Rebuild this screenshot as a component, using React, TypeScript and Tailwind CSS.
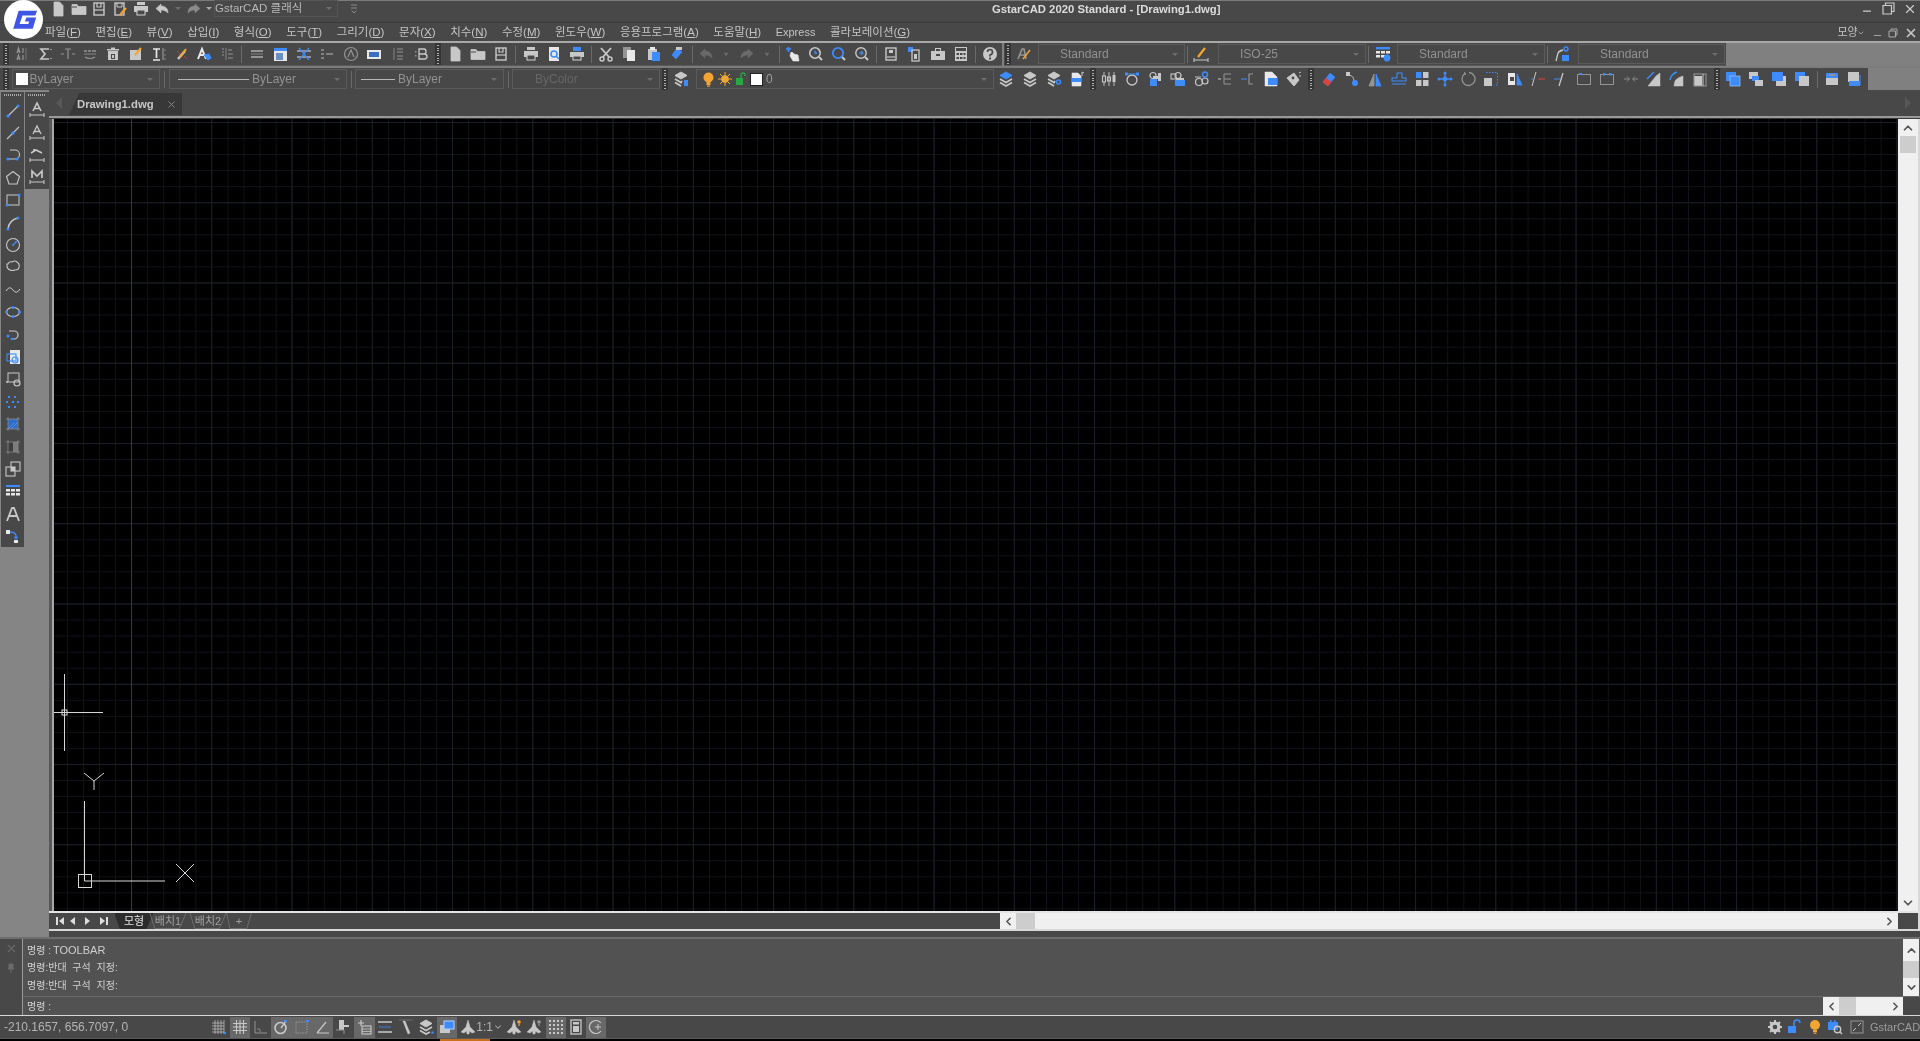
import React, { createElement as h } from 'react';
import { ChevronUp, ChevronDown, ChevronLeft, ChevronRight, X, Minus } from 'lucide-react';

const L = '#c8c8c8', M = '#949494', B = '#3d8bfd', O = '#f2a531', R = '#e0403c', W = '#e8e8e8', K = '#484848';
const Ic = (...kids: React.ReactNode[]) => h('svg', { width: 16, height: 16, viewBox: '0 0 16 16', fill: 'none' }, ...kids);
const p = (d: string, c = L, w = 1.2, f = 'none') => h('path', { d, stroke: c, strokeWidth: w, fill: f });
const r = (x: number, y: number, w: number, hh: number, f = L) => h('rect', { x, y, width: w, height: hh, fill: f });
const o = (x: number, y: number, w: number, hh: number, c = L, sw = 1.1) => h('rect', { x, y, width: w, height: hh, stroke: c, strokeWidth: sw, fill: 'none' });
const c = (x: number, y: number, rr: number, f = L) => h('circle', { cx: x, cy: y, r: rr, fill: f });
const cs = (x: number, y: number, rr: number, s = L, w = 1.2) => h('circle', { cx: x, cy: y, r: rr, stroke: s, strokeWidth: w, fill: 'none' });

const stack = (top: string, rest = L) => Ic(p('M8 1l6 3.5L8 8 2 4.5z', top, 1, top), p('M2 8l6 3.5L14 8', rest, 1.7), p('M2 11.5L8 15l6-3.5', rest, 1.7));

const g1 = [
  Ic(p('M3 7l1.5-5L6 7M3.5 5.5h2', M), p('M3 14l1.5-5L6 14M3.5 12.5h2', M), p('M9 2v5M9 9v5', M), p('M12 2v12', M, .6)),
  Ic(p('M12 3H4l4 5-4 5h8', L, 1.7), r(13, 3, 2, 1, M), r(13, 12, 2, 1, M)),
  Ic(p('M5 3h6M8 3v10', M), p('M1 8h3M12 8h3', M)),
  Ic(p('M2 5h3M6 5h3M10 5h4', M, 1.5), p('M2 8h12', M, .8), p('M3 11q5 3 10 0', M)),
  Ic(r(3, 5, 10, 9), r(2, 3, 12, 1.5), r(6, 1.5, 4, 1.5), r(6, 8, 4, 5, K), r(7, 9, 2, 3)),
  Ic(r(2, 4, 11, 10), p('M7 9l6-7', O, 2)),
  Ic(p('M2 3h7M5.5 3v9M2 14h7', W, 1.7), p('M12 2v12', M), p('M14 3v2M14 8v2M14 12v2', M, .8)),
  Ic(p('M4 13l7-8', L, 2.5), p('M6 11l6-8', O, 2), p('M3 5l3 3M10 10l3 3', R, .8)),
  Ic(p('M2 13l4-10 4 10M4 9h4', W, 2), p('M8 9l5-1 2 4-3 2z', B, 1, B)),
  Ic(p('M7 2v12', M, .8), p('M3 3h2M3 6h2M3 9h2', M), p('M9 4h4M9 8h5M9 12h5', M)),
];
const abc = Ic(p('M2 5h12', M, 2), p('M2 8h12', M, .8), p('M2 11h12', M, 2));
const g2 = [
  abc,
  Ic(r(2, 2, 13, 13, W), r(2, 2, 13, 3, B), r(4, 7, 7, 7, '#6d8fc0')),
  Ic(p('M1 5h14', M, 2), p('M1 11h14', M, 2), p('M3 2l10 12M13 2L3 14', B, 1.3)),
  Ic(p('M2 4h3M2 8h3M2 12h3', M, 1.3), p('M7 8h7', M, 1.5)),
  Ic(cs(8, 8, 6.5, M), p('M5 11l3-7 3 7', M)),
  Ic(r(1, 4, 14, 9, W), r(3, 6, 10, 5, '#3d6fc0')),
  Ic(p('M4 2v12', M, .8), p('M7 3h6M7 6h6M7 10h6M7 13h6', M)),
  Ic(r(2, 5, 1.5, 1.5, M), r(2, 9, 1.5, 1.5, M), p('M6 3h5q2 0 2 2.5T11 8H6zM6 8h5.5q2.5 0 2.5 2.5T11.5 13H6z', L, 1.3)),
];
const doc = Ic(p('M4 1h5.5L13 4.5V15H4z', L, .8, L));
const folder = Ic(p('M1 3.5h5l1.5 2H15v8H1z', L, .8, L), r(1, 5.5, 5, 1, K));
const save = Ic(o(3, 2, 10, 12, L, 1.4), p('M6 2v4h4V2', L, 1.2), p('M3 9h10', L, 1.2));
const g3 = [doc, folder, save];
const g4 = [
  Ic(r(4, 1, 8, 3), r(1, 5, 14, 6), r(4, 9, 8, 5, K), o(4, 9, 8, 5, L)),
  Ic(r(3, 1, 10, 14, W), cs(8, 8, 3, B, 1.6), p('M10 10l3 3', B, 1.6)),
  Ic(r(4, 1, 8, 4, B), r(1, 6, 14, 5), r(4, 10, 8, 5, K), o(4, 10, 8, 4, L)),
];
const g5 = [
  Ic(p('M3 2l8 9M13 2L5 11', L, 1.8), cs(4, 13, 2, L, 1.5), cs(12, 13, 2, L, 1.5)),
  Ic(r(2, 1, 8, 11, M), r(6, 4, 8, 11, W)),
  Ic(r(3, 3, 9, 11, L), r(5, 1, 5, 3, W), r(7, 6, 8, 9, B)),
  Ic(p('M3 9l5-7 5 4-6 7z', B, .6, B), r(7, 1, 6, 3, L)),
];
const und = '#6a6a6a';
const undo = Ic(p('M7 3L2 7.5 7 12V9c3 0 5 1 7 3 0-5-3-7-7-7z', und, .5, und));
const redo = Ic(p('M9 3l5 4.5L9 12V9c-3 0-5 1-7 3 0-5 3-7 7-7z', und, .5, und));
const tri = (col: string) => Ic(p('M6 7h4l-2 3z', col, .5, col));
const g6 = [undo, tri(und), redo, tri(und)];
const g7 = [
  Ic(p('M1 3h5M3.5 1v5', B, 1.7), p('M6 6l1 1v-1l2 2 4 1 1 6H8L5 10z', W, .6, W)),
  Ic(cs(7, 7, 5.2, L, 1.6), p('M11 11l3 3', L, 2), p('M7 4.5V7h2', B, 1.3)),
  Ic(cs(7, 7, 5.2, B, 1.8), p('M11 11l3 3', L, 2)),
  Ic(cs(7, 7, 5.2, L, 1.4), p('M11 11l3 3', L, 2), p('M5 7h4M7 5l2 2-2 2', B, 1.2)),
];
const g8 = [
  Ic(o(3, 2, 10, 12, L, 1.4), r(6, 4, 4, 3), p('M4 11h8', L, 1.2)),
  Ic(r(2, 1, 5, 5, B), o(6, 4, 7, 11, L, 1.3), r(8, 8, 3, 5)),
  Ic(r(1, 5, 14, 9), r(5, 2, 6, 3, L), r(6, 3, 4, 2, K), r(6, 8, 4, 2, K)),
  Ic(r(2, 1, 12, 14), r(3, 2, 10, 3, K), r(3.5, 7, 2.5, 2, K), r(7, 7, 2.5, 2, K), r(10.5, 7, 2, 2, K), r(3.5, 11, 2.5, 2, K), r(7, 11, 2.5, 2, K), r(10.5, 11, 2, 2, K)),
];
const help = Ic(c(8, 8, 7, L), p('M5.5 6q0-2.5 2.5-2.5T10.5 6 8 9v1.5', K, 1.7), r(7, 11.5, 2, 2, K));

const layerRow = [stack(B), stack(L), Ic(p('M8 1l6 3.5L8 8 2 4.5z', L, 1, L), p('M2 8l6 3.5L9 10', L, 1.7), p('M2 11.5L8 15', L, 1.7), cs(12.5, 11, 2, B, 1.5)), Ic(p('M3 2h6l3 3v10H3z', W, .6, W), r(3, 7, 9, 4, B), p('M13 5V1l2 1', L, 1))];
const g9 = [
  Ic(p('M3 1v14M13 1v14M8 1v14', L, .9), r(1.5, 5, 3, 6, K), o(1.5, 5, 3, 6), o(6.5, 6, 3, 4), r(11.5, 4, 3, 7)),
  Ic(cs(8, 9, 5, L, 1.3), p('M3 3h10', B, 1), r(12, 1.5, 3, 3, B), r(1, 1.5, 3, 3, B)),
  Ic(cs(6, 4.5, 3, L), r(3, 8, 7, 7, B), r(6, 5, 8, 3, L), r(11, 2, 3, 8, L)),
  Ic(cs(8, 4.5, 3, L), o(1, 3, 5, 5, L), r(5, 9, 10, 6, B), r(6, 7, 8, 2, L)),
  Ic(cs(5, 11, 3.5, L), cs(11, 10, 3, L), cs(11, 3.5, 2.5, B, 1.5), p('M1 6h6', L, 1)),
  Ic(p('M1 8h3', L, 1), p('M7 3v10M7 3h7M7 8h7M7 13h7', M, 1)),
  Ic(p('M1 8h6', B, 1), p('M13 3H9v10h4', M, 1.2)),
  Ic(p('M2 1h7l5 5v9H2z', W, .5, W), r(5, 7, 9, 7, B)),
  Ic(p('M1 7l7-5 5 7-5 6z', L, 1, L), c(7, 7, 1.4, K), p('M13 2l2-1M13 5h2', L, 1)),
];
const g10 = [
  Ic(p('M2 11l7-9 5 4-7 9z', B, .5, B), p('M2 11l3-4 5 4-3 4z', R, .5, R)),
  Ic(r(2, 1, 4, 4, L), p('M5 4q5 1 5 6', L, .9), c(11, 12, 3, B)),
  Ic(p('M7 3v12H2z', M, .8, M), p('M9 3v12h5z', B, .8, B)),
  Ic(p('M6 7V2h5v5h4v3H1V7zM1 13h14', B, 1.1)),
  Ic(r(2, 1, 5.5, 6, B), r(9, 1, 5.5, 6, L), r(2, 9, 5.5, 6, L), r(9, 9, 5.5, 6, L)),
  Ic(p('M8 1v14M1 8h14', B, 1.3), c(8, 2, 1.5, B), c(8, 14, 1.5, B), c(2, 8, 1.5, B), c(14, 8, 1.5, B), c(8, 8, 2.4, B)),
  Ic(p('M5 2.5a6.5 6.5 0 1 0 4-1', M, 1.3), p('M4 1l2 2-3 1', M, 1)),
  Ic(r(1, 7, 8, 8, L), h('path', { d: 'M3 1.5h11.5V14H11', stroke: B, strokeWidth: 1, strokeDasharray: '1.5 1.5' })),
  Ic(r(1, 2, 7, 12, W), p('M10 3v11h5z', B, .8, B), r(3, 6, 4, 4, K)),
  Ic(p('M6 1L2 15', L, 1), p('M8 8h7', R, 1), p('M1 8h3', B, 1)),
  Ic(p('M10 2L6 15', L, 1.3), p('M1 8h6', B, 1)),
  Ic(o(1.5, 3.5, 13, 10, M, 1), r(3, 2, 3, 2, B)),
  Ic(o(1.5, 3.5, 13, 10, M, 1), r(4, 2, 2.5, 2.5, B), r(10, 2, 2.5, 2.5, B)),
  Ic(p('M1 8h5M4 5.5L6.5 8 4 10.5M15 8h-5M12 5.5L9.5 8l2.5 2.5', M, .9)),
  Ic(p('M14 2v13H2L10 5z', L, .5, L), p('M1 8L8 1', B, 1.5)),
  Ic(p('M14 5v10H5q0-8 9-10z', L, .5, L), p('M1 9Q2 3 8 1', B, 1.5)),
  Ic(r(2, 5, 8, 10, L), o(2, 3, 12, 12, M), p('M11 3v12', L, 1)),
];
const g11 = [Ic(r(5, 5, 10, 10, B), r(1, 1, 10, 9, B), o(5, 5, 10, 10, '#9cc4ff', .7)), Ic(r(1, 1, 9, 7, L), r(4, 5, 7, 5, B), r(7, 9, 8, 6, L)), Ic(r(5, 5, 10, 10, L), r(1, 1, 11, 9, B)), Ic(r(1, 1, 10, 9, B), r(5, 5, 10, 10, L))];
const g12 = [Ic(r(2, 5, 12, 9, L), r(2, 2, 12, 5, B), r(5, 3, 6, 2, M)), Ic(r(2, 1, 11, 10, L), r(3, 10, 11, 5, B), p('M14 4v10', B, 1))];

const leftA = [
  Ic(p('M3 13L13 3', L, 1.1), c(3, 13, 1.6, B), c(13, 3, 1.6, B)),
  Ic(p('M2 14L14 2', L, 1.1), c(8, 8, 1.8, B)),
  Ic(p('M5 3h5a4 4 0 0 1 0 9H4', L, 1.1), c(3, 12, 1.6, B), c(12, 12, 1.6, B)),
  Ic(p('M8 1.5l6.5 5-2.5 7.5H4L1.5 6.5z', L, 1.1)),
  Ic(o(2, 3, 12, 10, L, 1), c(14, 3, 1.5, B), c(2, 13, 1.5, B)),
  Ic(p('M3 14Q4 5 13 3', L, 1.4), c(3, 14, 1.5, B), c(13, 3, 1.5, B)),
  Ic(cs(8, 8, 6.5, L, 1.1), p('M8 8l3-3', B, 1.1), c(8, 8, 1, B), c(11, 5, 1, B)),
  Ic(p('M3 5q1-3 4-2 3-2 5 0 3 2 2 5 0 3-4 3-3 1-5 0-3-1-3-4 0-1 0-2z', L, 1.1)),
  Ic(p('M1 9q3.5-6 7-1t7-1', L, 1)),
  Ic(h('ellipse', { cx: 8, cy: 8, rx: 6.5, ry: 4.5, stroke: L, strokeWidth: 1.1 }), c(8, 3.5, 1.5, B), c(1.5, 8, 1.5, B), c(14.5, 8, 1.5, B), c(8, 12.5, 1.5, B)),
  Ic(p('M4 4h5a4 4 0 0 1 0 8H6', L, 1.2), c(3, 9, 1.5, B), c(7, 12, 1.3, B)),
  Ic(r(5, 1, 10, 14, W), o(2, 5, 9, 7, B), cs(10, 11, 3, B)),
  Ic(o(3, 2, 11, 9, L, 1), cs(12, 12, 3, L), c(2, 11, 1, L)),
  Ic(r(3, 2, 2, 2, B), r(9, 2, 2, 2, B), r(1, 7, 2, 2, B), r(7, 7, 2, 2, B), r(12, 7, 2, 2, B), r(3, 12, 2, 2, B), r(9, 12, 2, 2, B)),
  Ic(r(3, 3, 10, 10, '#2e6ec8'), p('M3 13l6-6M6 13l7-7', '#6fa0e8', .6), p('M1 3h14M1 13h14M3 1v14M13 1v14', M, .7)),
  Ic(r(3, 3, 10, 10, '#7c7c7c'), r(3, 3, 5, 10, '#3e3e3e'), p('M1 3h14M1 13h14M3 1v14M13 1v14', M, .7)),
  Ic(o(6, 1, 9, 9, L, 1.1), o(1, 6, 9, 9, L, 1.1), r(6, 6, 4, 4, L)),
  Ic(r(1, 2, 14, 2, B), r(1, 6, 4, 2.5, W), r(6, 6, 4, 2.5, W), r(11, 6, 4, 2.5, W), r(1, 10, 4, 2.5, W), r(6, 10, 4, 2.5, W), r(11, 10, 4, 2.5, W)),
  Ic(p('M2 15L7 2h2l5 13M4.5 10h7', L, 1.8)),
  Ic(r(1, 2, 4, 4, W), p('M5 4q7 0 6 6', B, 1.5), p('M9 9h4l-2 2.5z', B, .5, B), r(9, 12, 4, 3, W)),
];
const dimBase = 'M1 14h14M1 12v4M15 12v4';
const leftB = [
  Ic(p('M4 10l4-8 4 8M5.5 7.5h5', L, 1.6), p(dimBase, L, 1)),
  Ic(p('M4 10l4-8 4 8M5.5 7.5h5', L, 1.3), p(dimBase, L, 1)),
  Ic(p('M2 7l5-3 6 3M5 3v3', L, 1.6), p(dimBase, L, 1)),
  Ic(p('M3 10V3l5 5 5-5v7', L, 1.7), p(dimBase, L, 1)),
];
const statusA = [
  Ic(p('M1 4h12M1 7h12M1 10h12M1 13h12M4 1v14M7 1v14M10 1v14M13 1v14', L, .7), c(14, 14, 1.2, B)),
  Ic(p('M1 4.5h14M1 11.5h14M4.5 1v14M11.5 1v14', L, 1.1), p('M8 1v14M1 8h14', L, 1.1)),
  Ic(p('M2 2v12h12', M, 1), p('M4 10h3v3', M, .8)),
  Ic(cs(7.5, 9, 5.5, L, 1.6), p('M8 9l5-7', L, 1.3), r(11, 1, 3, 2, B)),
  Ic(h('rect', { x: 2, y: 3, width: 11, height: 11, stroke: M, strokeWidth: 1, strokeDasharray: '1.5 1' }), r(12, 1, 3, 2, B)),
  Ic(p('M2 14h12M2 14l9-11', L, 1.2)),
  Ic(r(4, 1, 5, 10), r(9, 6, 5, 2), p('M1 11h8M9 11v4', M, 1)),
  Ic(p('M5 1v6M2 4h6', L, 1.2), o(6, 7, 9, 8, L, 1.1), p('M6 10h9M6 12.5h9', L, .8)),
  Ic(p('M1 3h14M1 13h14', L, 1.6), p('M2 8h12', B, .8)),
  Ic(p('M5 2l2 0 5 12-2 1z', L, .5, L), p('M1 1h14', '#777', .8)),
  Ic(p('M8 1l6 3.5L8 8 2 4.5z', L, 1, L), p('M2 8l6 3.5L14 8', L, 1.6), p('M2 11.5L8 15l4-2', L, 1.6), c(14.5, 13.5, 1.2, B)),
  Ic(r(1, 6, 10, 8, L), r(5, 2, 10, 8, B), o(5, 2, 10, 8, '#a8ccff')),
];
const annot = (dot?: string) => Ic(p('M8 1l2 7 5 5-3 1-2.5-2L9 15H7l-.5-3L4 14l-3-1 5-5z', L, .5, L), ...(dot ? [c(13, 3, 1.8, dot), r(12.4, 5, 1.2, 2, dot)] : []));
const statusB = [
  Ic(...[2, 6, 10, 14].flatMap((x) => [2, 6, 10, 14].map((y) => r(x - 1, y - 1, 2, 2, L)))),
  Ic(o(3, 1, 10, 14, L, 1.3), r(5, 3, 6, 2.5), r(5, 7, 6, 6, L)),
  Ic(p('M13 4a6.5 6.5 0 1 0 0 8', L, 1.2), p('M7 8h6M10 5v6', L, 1)),
];

const Cell = ({ i, w }: { i: React.ReactNode; w: string }) => <div className={`${w} h-full flex items-center justify-center shrink-0`}>{i}</div>;
const Gap = ({ w, line }: { w: string; line?: boolean }) => (
  <div className={`${w} h-full flex items-center justify-center shrink-0`}>{line && <div className="w-px h-[17px] bg-[#6a6a6a]" />}</div>
);
const Grip = ({ w }: { w: string }) => (
  <div className={`${w} h-full flex items-center justify-center shrink-0`}>
    <div className="w-[6px] h-full bg-[#353535] flex items-center justify-center">
      <div className="w-[2px] h-[19px] bg-[repeating-linear-gradient(0deg,#b0b0b0_0_1px,transparent_1px_2.5px)]" />
    </div>
  </div>
);
const Group = ({ items, w }: { items: React.ReactNode[]; w: string }) => <>{items.map((i, k) => <Cell key={k} i={i} w={w} />)}</>;
const Arrow = () => <div className="w-0 h-0 border-x-[3px] border-x-transparent border-t-[3px] border-t-[#6e6e6e] shrink-0" />;
const Combo = ({ w, pl, children }: { w: string; pl?: string; children?: React.ReactNode }) => (
  <div className={`${w} ${pl ?? ''} h-[20px] border border-[#5b5b5b] flex items-center shrink-0 text-[12px] text-[#929292] pr-[6px]`}>
    <div className="flex-1 flex items-center min-w-0 whitespace-nowrap">{children}</div>
    <Arrow />
  </div>
);

const MenuItem = ({ t, k }: { t: string; k?: string }) => (
  <span className="whitespace-nowrap">{t}{k && <>(<u>{k}</u>)</>}</span>
);

const Tab = ({ t, active, w }: { t: string; active?: boolean; w: string }) => (
  <div className={`relative h-[16px] flex items-center justify-center shrink-0 text-[11px] ${w} ${active ? 'text-[#e2e2e2]' : 'text-[#a0a0a0]'}`}>
    <svg className="absolute inset-0 w-full h-full" viewBox="0 0 40 16" preserveAspectRatio="none">
      <path d="M1 0 L6 15.5 H32 L39 0" fill={active ? '#2c2c2c' : 'none'} stroke={active ? '#2c2c2c' : '#6c6c6c'} strokeWidth="1" vectorEffect="non-scaling-stroke" />
    </svg>
    <span className="relative">{t}</span>
  </div>
);

const ScrollBtn = ({ className, children }: { className: string; children: React.ReactNode }) => <div className={`${className} flex items-center justify-center shrink-0 text-[#555]`}>{children}</div>;

export default function App() {
  return (
    <div className="w-[1920px] h-[1041px] overflow-hidden bg-[#484848]">
    <div className="relative w-[1920px] h-[1041px] overflow-hidden flex flex-col bg-[#484848] text-[#c8c8c8] blur-[0.35px] font-['Liberation_Sans','Noto_Sans_CJK_KR',sans-serif]">
      {/* logo */}
      <svg className="absolute top-0 left-[4px] w-[39px] h-[39px] z-10" viewBox="0 0 40 40">
        <circle cx="20" cy="20" r="20" fill="#fff" />
        <path d="M15 11 L34 11 L32 16 L19 16 L16 24.5 L25 24.5 L25.8 22 L21.5 22 L23 18 L33 18 L29.5 29.5 L9.5 29.5 Z" fill="#3f55e4" />
      </svg>

      {/* title bar */}
      <div className="relative h-[23px] shrink-0 border-t border-t-[#7a7a7a] border-b border-b-[#3a3a3a] flex items-center pb-[6px] bg-[#484848]">
        <div className="w-[47px] shrink-0" />
        <Cell w="w-[21px]" i={doc} />
        <Cell w="w-[21px]" i={folder} />
        <Cell w="w-[20px]" i={save} />
        <Cell w="w-[21px]" i={Ic(o(3, 2, 9, 12, L, 1.4), p('M5 2v4h5V2', L, 1), p('M8 14l6-7', O, 2.2))} />
        <Cell w="w-[22px]" i={Ic(r(4, 1, 8, 3), r(1, 5, 14, 6), r(4, 9, 8, 5, K), o(4, 9, 8, 5, L))} />
        <Cell w="w-[20px]" i={Ic(p('M7 3L2 7.5 7 12V9c3 0 5 1 7 3 0-5-3-7-7-7z', L, .5, L))} />
        <Cell w="w-[12px]" i={<Arrow />} />
        <Cell w="w-[20px]" i={Ic(p('M9 3l5 4.5L9 12V9c-3 0-5 1-7 3 0-5 3-7 7-7z', '#8a8a8a', .5, '#8a8a8a'))} />
        <Cell w="w-[9px]" i={<div className="w-0 h-0 border-x-[3px] border-x-transparent border-t-[3px] border-t-[#aaa]" />} />
        <div className="ml-[1px] w-[124px] h-[17px] border border-[#555] flex items-center text-[11.5px] text-[#b8b8b8] pr-[5px] shrink-0">
          <span className="flex-1 whitespace-nowrap">GstarCAD 클래식</span>
          <Arrow />
        </div>
        <Cell w="w-[31px]" i={<svg width="8" height="10" viewBox="0 0 8 10"><path d="M1 1h6M1 4h6M1.5 6.5L4 9l2.5-2.5" stroke="#8a8a8a" fill="none" /></svg>} />
        <div className="flex-1" />
        <div className="absolute left-[992px] top-0 text-[11.3px] font-bold text-[#dcdcdc] whitespace-nowrap">GstarCAD 2020 Standard - [Drawing1.dwg]</div>
        <Minus size={12} strokeWidth={2.5} className="text-[#ccc] mt-[4px] mr-[9px]" />
        <svg width="13" height="13" viewBox="0 0 13 13" className="mr-[8px]"><path d="M3.5 3V1H12V9.5H9.5M1 3.5H9.5V12H1z" stroke="#ccc" strokeWidth="1.2" fill="none" /></svg>
        <X size={14} strokeWidth={2} className="text-[#ccc] mr-[3px]" />
      </div>

      {/* menu */}
      <div className="h-[18px] shrink-0 flex items-center text-[11.5px] text-[#c4c4c4] pl-[45px] pr-[2px] pt-[1px] gap-[14.6px]">
        {[['파일', 'F'], ['편집', 'E'], ['뷰', 'V'], ['삽입', 'I'], ['형식', 'O'], ['도구', 'T'], ['그리기', 'D'], ['문자', 'X'], ['치수', 'N'], ['수정', 'M'], ['윈도우', 'W'], ['응용프로그램', 'A'], ['도움말', 'H']].map(([t, k]) => (
          <MenuItem key={t} t={t} k={k} />
        ))}
        <span className="text-[11px]">Express</span>
        <MenuItem t="콜라보레이션" k="G" />
        <div className="flex-1" />
        <span className="whitespace-nowrap text-[11px]">모양</span>
        <ChevronDown size={8} className="-ml-[15px] mr-[4px]" />
        <Minus size={11} strokeWidth={2} className="text-[#aaa] mt-[6px] -ml-[12px]" />
        <svg width="10" height="10" viewBox="0 0 10 10" className="-ml-[9px]"><path d="M3 2.5V1H9V7H7.5M1 3H7.5V9H1z" stroke="#aaa" fill="none" /></svg>
        <X size={14} strokeWidth={3} className="text-[#c4c4c4] -ml-[9px]" />
      </div>
      <div className="h-[2px] shrink-0 bg-[#a8a8a8]" />

      {/* toolbar 1 */}
      <div className="h-[23px] shrink-0 flex bg-[#808080]">
        <div className="flex h-full items-center bg-[#484848] border-b border-b-[#5a5a5a] w-[1002px] shrink-0">
          <Gap w="w-[2px]" />
          <Grip w="w-[8px]" />
          <Gap w="w-[0.6px]" />
          <Group items={g1} w="w-[22.8px]" />
          <Gap w="w-[6.6px]" line />
          <Group items={g2} w="w-[23.5px]" />
          <Grip w="w-[10.3px]" />
          <Group items={g3} w="w-[23px]" />
          <Gap w="w-[7px]" line />
          <Group items={g4} w="w-[23px]" />
          <Gap w="w-[5.5px]" line />
          <Group items={g5} w="w-[23.7px]" />
          <Gap w="w-[7px]" line />
          <Group items={g6} w="w-[20.4px]" />
          <Gap w="w-[4px]" line />
          <Group items={g7} w="w-[23px]" />
          <Gap w="w-[6px]" line />
          <Group items={g8} w="w-[23.4px]" />
          <Gap w="w-[5px]" line />
          <Cell i={help} w="w-[24px]" />
        </div>
        <div className="w-[2px] shrink-0" />
        <div className="flex h-full items-center bg-[#484848] border-b border-b-[#5a5a5a] w-[722px] shrink-0">
          <Grip w="w-[8px]" />
          <Cell w="w-[23px]" i={Ic(p('M2 13l4-10h2l2 10M4 9h5', M, 1.6), p('M7 13L14 4', O, 1.4))} />
          <Gap w="w-[3px]" />
          <Combo w="w-[147px]" pl="pl-[21px]">Standard</Combo>
          <Gap w="w-[4px]" line />
          <Cell w="w-[23px]" i={Ic(p('M1 14h14M1 12v4M15 12v4', L, 1), p('M5 11l7-9', O, 2.2))} />
          <Gap w="w-[6px]" />
          <Combo w="w-[148px]" pl="pl-[21px]">ISO-25</Combo>
          <Gap w="w-[5px]" line />
          <Cell w="w-[23px]" i={Ic(r(1, 1, 14, 2.4, B), r(1, 5, 4, 2.5, W), r(6, 5, 4, 2.5, W), r(11, 5, 4, 2.5, W), r(1, 9, 4, 2.5, W), r(6, 9, 4, 2.5, W), c(12, 12, 3.4, B))} />
          <Gap w="w-[3px]" />
          <Combo w="w-[148px]" pl="pl-[21px]">Standard</Combo>
          <Gap w="w-[5px]" line />
          <Cell w="w-[23px]" i={Ic(p('M2 15l2-8q1-2 5-3', L, 1.3), cs(12, 3, 2, B, 1.4), r(8, 9, 7, 6, B))} />
          <Gap w="w-[5px]" />
          <Combo w="w-[147px]" pl="pl-[21px]">Standard</Combo>
        </div>
      </div>
      <div className="h-[2px] shrink-0 bg-[#7c7c7c]" />

      {/* toolbar 2 */}
      <div className="h-[22px] shrink-0 flex bg-[#808080]">
        <div className="flex h-full items-center bg-[#484848] w-[1868px] shrink-0">
          <Gap w="w-[2px]" />
          <Grip w="w-[8px]" />
          <Gap w="w-[2px]" />
          <Combo w="w-[148px]" pl="pl-[3px]">
            <span className="w-[12px] h-[12px] bg-white mr-[1.5px] shrink-0" />
            ByLayer
          </Combo>
          <Gap w="w-[9px]" line />
          <Combo w="w-[178px]" pl="pl-[8px]">
            <span className="w-[71px] h-px bg-[#b8b8b8] mr-[3px] shrink-0" />
            ByLayer
          </Combo>
          <Gap w="w-[8px]" line />
          <Combo w="w-[149px]" pl="pl-[5px]">
            <span className="w-[34px] h-px bg-[#b8b8b8] mr-[3px] shrink-0" />
            ByLayer
          </Combo>
          <Gap w="w-[8px]" line />
          <Combo w="w-[148px]" pl="pl-[22px]"><span className="text-[#666]">ByColor</span></Combo>
          <Grip w="w-[9.5px]" />
          <Cell w="w-[23px]" i={Ic(p('M8 1l6 3.5L8 8 2 4.5z', L, 1, L), p('M2 8l6 3.5L9 10', L, 1.7), p('M2 11.5L8 15', L, 1.7), r(11, 9, 4, 6, B))} />
          <Gap w="w-[3.5px]" />
          <Combo w="w-[298px]" pl="pl-[3px]">
            <div className="w-[16px] flex justify-center">{h('svg', { width: 13, height: 15, viewBox: '0 0 13 15' }, c(6.5, 5.5, 5, O), r(4.5, 10, 4, 3, O), r(5, 13.5, 3, 1.2, O))}</div>
            <div className="w-[18px] flex justify-center">{Ic(c(8, 8, 3.8, O), p('M8 1v14M1 8h14M3 3l10 10M13 3L3 13', O, 1))}</div>
            <div className="w-[14px] flex justify-center">{h('svg', { width: 12, height: 14, viewBox: '0 0 12 14' }, r(1, 6, 7, 7, '#27a844'), p('M6 6V3q0-2 2-2t2 2v1', '#27a844', 1.3))}</div>
            <span className="w-[13px] h-[13px] bg-white border border-[#222] ml-[2px] mr-[3px] shrink-0" />
            <span className="text-[#9c9c9c]">0</span>
          </Combo>
          <Gap w="w-[0.4px]" />
          <Group items={layerRow} w="w-[23.7px]" />
          <Grip w="w-[8.5px]" />
          <Group items={g9} w="w-[23.1px]" />
          <Grip w="w-[12px]" />
          <Group items={g10} w="w-[23.2px]" />
          <Grip w="w-[10px]" />
          <Group items={g11} w="w-[23px]" />
          <Gap w="w-[7.5px]" line />
          <Group items={g12} w="w-[22px]" />
        </div>
      </div>

      {/* middle */}
      <div className="h-[847px] shrink-0 flex">
        {/* left dock */}
        <div className="w-[49px] shrink-0 bg-[#858585] flex items-start pt-[2px] pl-px gap-px">
          <div className="w-[23px] bg-[#484848] flex flex-col items-center shrink-0 pt-[2px]">
            <div className="w-[18px] h-[2px] bg-[repeating-linear-gradient(90deg,#a8a8a8_0_1px,transparent_1px_2px)]" />
            <div className="h-[3.5px]" />
            {leftA.map((i, k) => <div key={k} className="h-[22.4px] flex items-center justify-center">{i}</div>)}
          </div>
          <div className="w-[24px] bg-[#484848] flex flex-col items-center shrink-0 pt-[2px] pb-[1px]">
            <div className="w-[18px] h-[2px] bg-[repeating-linear-gradient(90deg,#a8a8a8_0_1px,transparent_1px_2px)]" />
            <div className="h-[2px]" />
            {leftB.map((i, k) => <div key={k} className="h-[22.4px] flex items-center justify-center">{i}</div>)}
          </div>
        </div>

        {/* main */}
        <div className="flex-1 flex flex-col min-w-0">
          {/* tabs row */}
          <div className="h-[26px] shrink-0 flex items-end">
            <div className="w-[20px] h-full flex items-center justify-center shrink-0">
              <div className="w-0 h-0 border-y-[6px] border-y-transparent border-r-[6px] border-r-[#585858]" />
            </div>
            <div className="w-[113px] h-[22px] mb-[1px] bg-[#383838] [clip-path:polygon(9%_0,100%_0,100%_100%,0_100%)] flex items-center pl-[7px] shrink-0">
              <span className="text-[11.3px] font-bold text-[#c8c8c8] whitespace-nowrap ml-px">Drawing1.dwg</span>
              <X size={11} strokeWidth={2} className="ml-[12px] text-[#8a8a8a]" />
            </div>
            <div className="flex-1" />
            <div className="w-[24px] h-full flex items-center justify-center shrink-0">
              <div className="w-0 h-0 border-y-[6px] border-y-transparent border-l-[6px] border-l-[#585858]" />
            </div>
          </div>
          <div className="h-[3px] shrink-0 border-t-2 border-t-[#999] bg-[#3a3a3a]" />

          {/* canvas row */}
          <div className="h-[792px] shrink-0 flex">
            <div className="w-[3px] bg-[#585858] shrink-0" />
            <div className="w-[2px] bg-[#a8a8a8] shrink-0" />
            <div className="flex-1 bg-black min-w-0">
              <svg className="block w-full h-full" viewBox="0 0 1844 792" shapeRendering="crispEdges">
                <defs>
                  <pattern id="minor" x="13" y="3" width="16.05" height="16.05" patternUnits="userSpaceOnUse">
                    <path d="M.5 0V17M0 .5H17" stroke="#10131a" fill="none" />
                  </pattern>
                  <pattern id="major" x="77" y="3" width="80.25" height="80.25" patternUnits="userSpaceOnUse">
                    <path d="M.5 0V81M0 .5H81" stroke="#1a1e26" fill="none" />
                  </pattern>
                </defs>
                <rect width="1844" height="792" fill="url(#minor)" />
                <rect width="1844" height="792" fill="url(#major)" />
                <path d="M77.5 0V792" stroke="#1b4a26" />
                <g shapeRendering="auto" fill="none" stroke="#d8d8d8" strokeWidth="1">
                  <path d="M10.5 555V632M0 593.5H49" />
                  <rect x="8" y="591" width="5" height="5" />
                  <path d="M30 654l10 8 10-8M40 662V671" />
                  <path d="M30.5 682V762H111" />
                  <rect x="24.5" y="755.5" width="13" height="13" />
                  <path d="M122 745L140 763M140 745L122 763" />
                </g>
              </svg>
            </div>
            <div className="w-[20px] shrink-0 bg-[#f0f0f0] flex flex-col">
              <ScrollBtn className="h-[17px]"><ChevronUp size={14} strokeWidth={3} /></ScrollBtn>
              <div className="h-[17px] mx-[2px] bg-[#cdcdcd] shrink-0" />
              <div className="flex-1" />
              <ScrollBtn className="h-[17px]"><ChevronDown size={14} strokeWidth={3} /></ScrollBtn>
            </div>
            <div className="w-[2px] bg-[#d8d8d8] shrink-0" />
          </div>
          <div className="h-[2px] shrink-0 bg-[#e4e4e4]" />

          {/* model tabs + h scroll */}
          <div className="h-[16px] shrink-0 flex items-center text-[#ddd]">
            <div className="w-[57px] shrink-0 flex items-center pl-[6.5px]">
              <svg width="52" height="10" viewBox="0 0 52 10" fill="#ddd" className="shrink-0">
                <path d="M0 1h2v8H0zM8 1v8L3 5zM14 5l5-4v8zM29 1l5 4-5 4zM44 1l5 4-5 4zM50 1h2v8h-2z" />
              </svg>
            </div>
            <div className="w-[8px] shrink-0" />
            <Tab t="모형" active w="w-[40px]" />
            <div className="-ml-[5px]" />
            <Tab t="배치1" w="w-[38px]" />
            <div className="w-[2px] shrink-0" />
            <Tab t="배치2" w="w-[38px]" />
            <div className="-ml-[1px]" />
            <Tab t="+" w="w-[26px]" />
            <div className="flex-1" />
            <div className="w-[898px] h-full bg-[#f0f0f0] flex items-center shrink-0">
              <ScrollBtn className="w-[16px]"><ChevronLeft size={13} strokeWidth={3} /></ScrollBtn>
              <div className="w-[19px] h-full bg-[#cdcdcd] shrink-0" />
              <div className="flex-1" />
              <ScrollBtn className="w-[18px]"><ChevronRight size={13} strokeWidth={3} /></ScrollBtn>
            </div>
            <div className="w-[20px] h-full bg-[#484848] shrink-0" />
            <div className="w-[2px] h-full bg-[#d8d8d8] shrink-0" />
          </div>
          <div className="h-[2px] shrink-0 bg-[#d8d8d8]" />
          <div className="h-[6px] shrink-0 bg-[#484848]" />
        </div>
      </div>

      {/* command window */}
      <div className="h-[78px] shrink-0 flex border-t-2 border-t-[#6e6e6e] bg-[#525252]">
        <div className="w-[22px] shrink-0 bg-[#484848] flex flex-col items-center pt-[3px] gap-[8px]">
          <X size={13} strokeWidth={2} className="text-[#6a6a6a]" />
          <svg width="8" height="10" viewBox="0 0 8 10"><path d="M2 1h4v4l1 1H1l1-1zM4 6v4" stroke="#6a6a6a" fill="#6a6a6a" /></svg>
        </div>
        <div className="w-[1px] bg-[#9a9a9a] shrink-0" />
        <div className="flex-1 flex flex-col min-w-0">
          <div className="h-[58px] shrink-0 flex border-b border-b-[#6a6a6a]">
            <div className="flex-1 pl-[4px] pt-[2.5px] text-[10px] text-[#cfcfcf]">
              <div className="h-[17.5px] flex items-center whitespace-nowrap">명령 : <span className="text-[11px] ml-[2px]">TOOLBAR</span></div>
              <div className="h-[17.5px] flex items-center whitespace-nowrap [word-spacing:3px]">명령:반대 구석 지정:</div>
              <div className="h-[17.5px] flex items-center whitespace-nowrap [word-spacing:3px]">명령:반대 구석 지정:</div>
            </div>
            <div className="w-[16px] shrink-0 bg-[#f0f0f0] flex flex-col mr-px">
              <ScrollBtn className="h-[22px]"><ChevronUp size={13} strokeWidth={3} /></ScrollBtn>
              <div className="h-[17px] bg-[#cdcdcd] shrink-0" />
              <div className="flex-1" />
              <ScrollBtn className="h-[17px]"><ChevronDown size={13} strokeWidth={3} /></ScrollBtn>
            </div>
          </div>
          <div className="flex-1 flex items-center">
            <div className="flex-1 pl-[4px] text-[10px] text-[#cfcfcf]">명령 :</div>
            <div className="w-[80px] h-full bg-[#f0f0f0] flex items-center shrink-0">
              <ScrollBtn className="w-[16px]"><ChevronLeft size={13} strokeWidth={3} /></ScrollBtn>
              <div className="w-[17px] h-full bg-[#cdcdcd] shrink-0" />
              <div className="flex-1" />
              <ScrollBtn className="w-[16px]"><ChevronRight size={13} strokeWidth={3} /></ScrollBtn>
            </div>
            <div className="w-[17px] h-full shrink-0 bg-[#484848]" />
          </div>
        </div>
      </div>
      <div className="h-px shrink-0 bg-[#d8d8d8]" />

      {/* status bar */}
      <div className="h-[23px] shrink-0 flex items-center bg-[#484848] border-b border-b-[#5a5a5a]">
        <span className="w-[209px] pl-[4px] text-[12px] text-[#b4b4b4] whitespace-nowrap shrink-0">-210.1657, 656.7097, 0</span>
        {statusA.map((i, k) => (
          <div key={k} className={`w-[20.7px] h-[21px] flex items-center justify-center shrink-0 ${[1, 3, 4, 5, 7, 11].includes(k) ? 'bg-[#686868]' : ''}`}>{i}</div>
        ))}
        <Cell w="w-[21px]" i={annot()} />
        <span className="text-[12px] text-[#b4b4b4] ml-[-2px] w-[17px]">1:1</span>
        <ChevronDown size={10} strokeWidth={2.5} className="text-[#aaa] shrink-0" />
        <Cell w="w-[22px]" i={annot(O)} />
        <Cell w="w-[18px]" i={annot('#999')} />
        <Gap w="w-[3px]" />
        <div className="w-[20px] h-[21px] bg-[#686868] flex items-center justify-center shrink-0">{statusB[0]}</div>
        <Cell w="w-[20px]" i={statusB[1]} />
        <div className="w-[20px] h-[21px] bg-[#686868] flex items-center justify-center shrink-0">{statusB[2]}</div>
        <div className="flex-1" />
        <Cell w="w-[20px]" i={Ic(c(8, 8, 5.5, L), c(8, 8, 2.3, K), p('M8 1v2M8 13v2M1 8h2M13 8h2M3 3l1.5 1.5M11.5 11.5L13 13M13 3l-1.5 1.5M4.5 11.5L3 13', L, 2))} />
        <Cell w="w-[20px]" i={Ic(r(1, 7, 8, 7, B), p('M7 7V4q0-3 3-3t3 3', B, 1.6))} />
        <Cell w="w-[20px]" i={Ic(c(8, 6, 5, O), r(6, 11, 4, 2, O), r(6.5, 13.5, 3, 1.3, O))} />
        <Cell w="w-[20px]" i={Ic(r(1, 3, 10, 8, B), r(3, 1, 1.5, 2, B), r(7, 1, 1.5, 2, B), cs(10.5, 10.5, 3.2, L, 1.4), p('M13 13l2 2', L, 1.5))} />
        <Cell w="w-[24px]" i={Ic(o(2, 2, 12, 12, M, 1), p('M9 7l3-3M7 9l-3 3', L, 1))} />
        <span className="text-[11px] text-[#9c9c9c] ml-[1px] w-[50px] whitespace-nowrap shrink-0">GstarCAD</span>
      </div>
      <div className="h-[2px] shrink-0 bg-black pl-[440px]">
        <div className="w-[50px] h-full bg-[#c8701c]" />
      </div>
    </div>
    </div>
  );
}
